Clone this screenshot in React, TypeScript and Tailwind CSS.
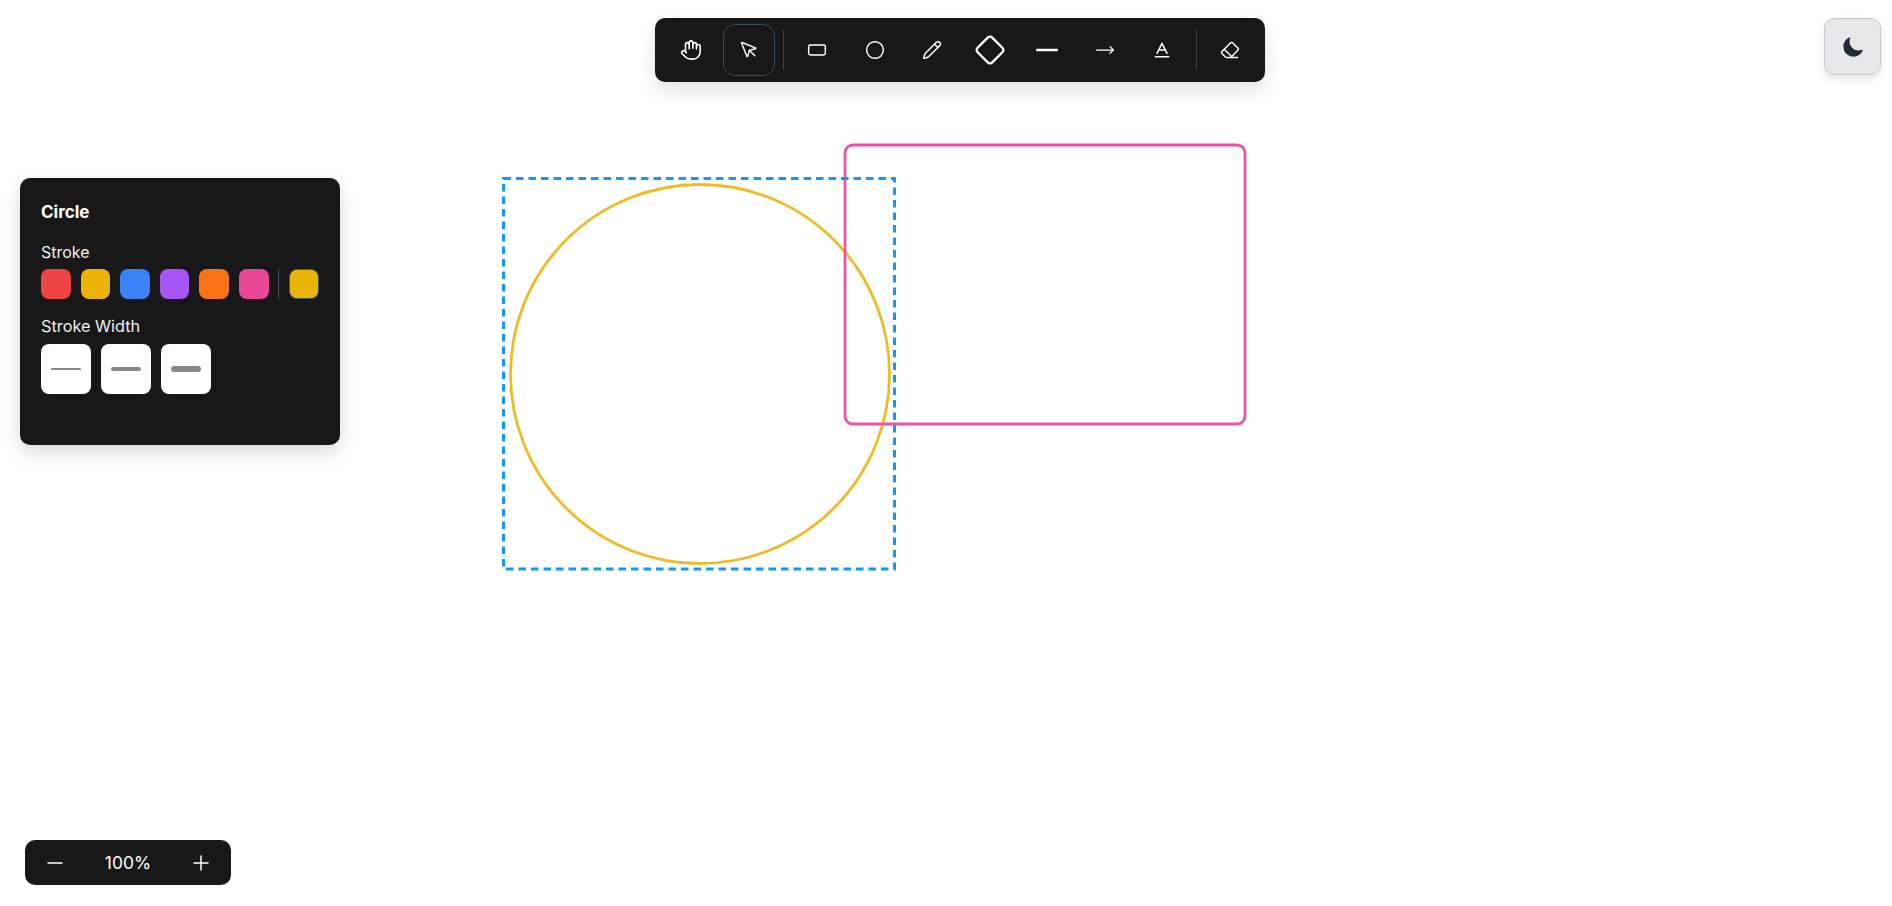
import { Circle, Diamond, Eraser, Hand, Minus, MousePointer, MoveRight, Pencil, Plus, RectangleHorizontal, Baseline } from 'lucide-react'
import { IoMoon } from 'react-icons/io5'

const colors = ['bg-[#ef4444]', 'bg-[#eab308]', 'bg-[#3b82f6]', 'bg-[#a855f7]', 'bg-[#f97316]', 'bg-[#ec4899]']

function ToolButton({ children, active }: { children: React.ReactNode; active?: boolean }) {
  return (
    <button className={`flex h-[52px] w-[52px] shrink-0 items-center justify-center rounded-xl border text-white ${active ? 'border-[#3d4757]' : 'border-transparent'}`}>
      {children}
    </button>
  )
}

function Toolbar() {
  return (
    <div className="absolute left-[655px] top-[18px] flex h-[64px] w-[610px] items-center gap-[5.6px] rounded-[10px] bg-[#181818] pl-[10px] shadow-[0_8px_20px_rgba(0,0,0,0.12)]">
      <ToolButton><Hand size={22} strokeWidth={1.75} /></ToolButton>
      <ToolButton active><MousePointer size={20} strokeWidth={1.7} /></ToolButton>
      <div className="ml-[3px] mr-[1px] h-[40px] w-px shrink-0 bg-[#444444]" />
      <ToolButton><RectangleHorizontal size={20} strokeWidth={1.75} /></ToolButton>
      <div className="ml-[1px]"><ToolButton><Circle size={20} strokeWidth={1.75} /></ToolButton></div>
      <div className="-ml-[1px]"><ToolButton><Pencil size={20} strokeWidth={1.75} /></ToolButton></div>
      <ToolButton><Diamond size={32} strokeWidth={1.75} /></ToolButton>
      <ToolButton><Minus size={34} strokeWidth={1.6} /></ToolButton>
      <ToolButton><MoveRight size={20} strokeWidth={1.5} /></ToolButton>
      <ToolButton><Baseline size={20} strokeWidth={1.75} /></ToolButton>
      <div className="mx-[2px] h-[40px] w-px shrink-0 bg-[#444444]" />
      <div className="-ml-[1px]"><ToolButton><Eraser size={20} strokeWidth={1.75} /></ToolButton></div>
    </div>
  )
}

function PropertiesPanel() {
  return (
    <div className="absolute left-[20px] top-[178px] h-[267px] w-[320px] rounded-[10px] bg-[#181818] p-[21px] text-white shadow-[0_8px_20px_rgba(0,0,0,0.15)]">
      <h3 className="mt-[1px] text-[17px] font-bold leading-[24px]">Circle</h3>
      <p className="mt-[16px] text-[16px] leading-[24px] text-[#f0f0f0]">Stroke</p>
      <div className="mt-[5px] flex h-[30px] items-center">
        <div className="flex gap-[10px]">
          {colors.map((c) => (
            <div key={c} className={`h-[30px] w-[29.6px] rounded-lg ${c}`} />
          ))}
        </div>
        <div className="ml-[9px] h-[30px] w-px bg-[#4b5563]" />
        <div className="ml-[10px] h-[30px] w-[30px] rounded-lg border border-[#4b5563] bg-[#eab308]" />
      </div>
      <p className="mt-[15px] text-[16.3px] leading-[24px] text-[#f0f0f0]">Stroke Width</p>
      <div className="mt-[6px] flex gap-[10px]">
        {['h-[2px]', 'h-[4px]', 'h-[6px]'].map((h) => (
          <button key={h} className="flex h-[50px] w-[50px] items-center justify-center rounded-lg bg-white">
            <span className={`block w-[30px] rounded-full bg-[#888888] ${h}`} />
          </button>
        ))}
      </div>
    </div>
  )
}

function ZoomControls() {
  return (
    <div className="absolute left-[25px] top-[840px] flex h-[45px] w-[206px] items-center justify-between rounded-[10px] bg-[#181818] px-[18px] text-white">
      <Minus size={24} strokeWidth={1.5} />
      <span className="text-[17.5px] leading-none">100%</span>
      <Plus size={24} strokeWidth={1.5} />
    </div>
  )
}

export default function App() {
  return (
    <div className="relative h-[906px] w-full overflow-hidden bg-white font-['Inter',sans-serif]">
      <svg className="absolute inset-0" width="1892" height="906">
        <circle cx="700" cy="374" r="189.5" fill="none" stroke="#efbb24" strokeWidth="2.8" />
        <rect x="845" y="145" width="400" height="279" rx="8" fill="none" stroke="#f052a3" strokeWidth="2.8" />
        <rect x="503.5" y="178.5" width="391" height="390.5" fill="none" stroke="#0d99ff" strokeWidth="3" strokeDasharray="7.5 5" />
      </svg>
      <Toolbar />
      <PropertiesPanel />
      <ZoomControls />
      <button className="absolute left-[1824px] top-[18px] flex h-[57px] w-[57px] items-center justify-center rounded-[10px] border border-[#c4c8d0] bg-[#e5e7eb] text-[#1f2937] shadow-[0_4px_10px_rgba(0,0,0,0.1)]">
        <IoMoon size={22} />
      </button>
    </div>
  )
}
